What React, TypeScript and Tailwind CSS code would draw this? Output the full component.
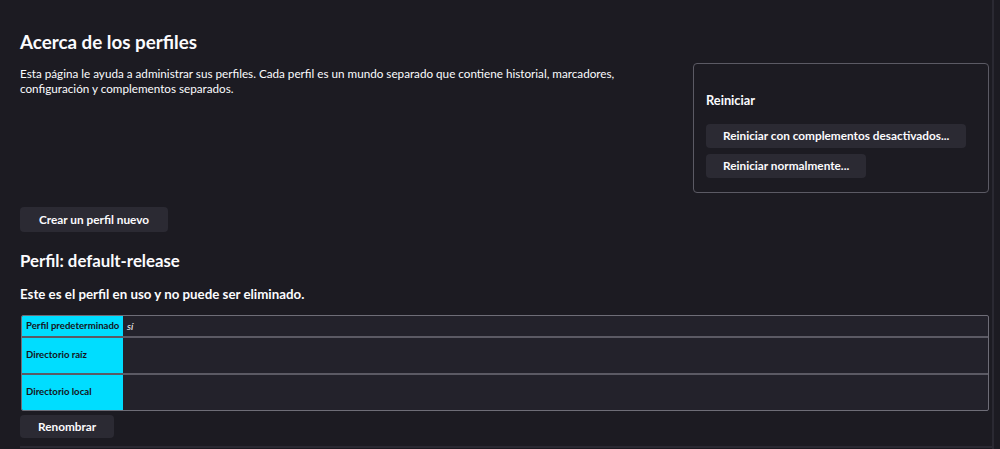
const font = "font-['Lato','Noto_Sans',sans-serif]";

const buttonClassName =
  "whitespace-nowrap rounded bg-[#2b2a33] text-[11.8px] font-bold text-[#fbfbfe] leading-none";

const rows = [
  { label: "Perfil predeterminado", value: "sí", height: "h-[20px]" },
  { label: "Directorio raíz", value: "", height: "h-[37px]" },
  { label: "Directorio local", value: "", height: "h-[37px]" },
];

export default function App() {
  return (
    <div
      className={`${font} h-[449px] w-[1000px] overflow-hidden bg-[#1c1b22] text-[#fbfbfe]`}
    >
      <div className="h-[449px] w-[994px] border-r-2 border-[#2a2932]">
        <div className="h-[446px] pl-5 pr-[3px]">
          <div className="flex justify-between">
            <div className="pt-[30px]">
              <h1 className="text-[18.8px] font-bold leading-[24px]">
                Acerca de los perfiles
              </h1>
              <p className="mt-[12px] w-[620px] text-[11.7px] leading-[15px]">
                Esta página le ayuda a administrar sus perfiles. Cada perfil es
                un mundo separado que contiene historial, marcadores,
                <br />
                configuración y complementos separados.
              </p>
            </div>
            <div className="mt-[63px] flex h-[130px] w-[296px] flex-col items-start rounded border border-[#5b5a64] px-3 pt-[26px]">
              <h2 className="text-[12.8px] font-bold leading-[20px]">
                Reiniciar
              </h2>
              <button className={`${buttonClassName} mt-[14px] h-[24px] px-[17px]`}>
                Reiniciar con complementos desactivados...
              </button>
              <button className={`${buttonClassName} mt-[6px] h-[24px] px-[17px]`}>
                Reiniciar normalmente...
              </button>
            </div>
          </div>
          <button className={`${buttonClassName} mt-[14px] h-[25px] px-[19px]`}>
            Crear un perfil nuevo
          </button>
          <h2 className="mt-[17px] text-[16.8px] font-bold leading-[24px]">
            Perfil: default-release
          </h2>
          <p className="mt-[12px] text-[13.3px] font-bold leading-[18px]">
            Este es el perfil en uso y no puede ser eliminado.
          </p>
          <div className="ml-px mt-[12px] overflow-hidden rounded-[2px] border border-[#6e6d77] bg-[#23222b]">
            {rows.map((row, i) => (
              <div
                key={row.label}
                className={`flex ${row.height} ${i > 0 ? "border-t-2 border-[#5b5a64]" : ""}`}
              >
                <div className="flex w-[101px] shrink-0 items-center whitespace-nowrap bg-[#00ddff] pl-[4px] text-[9.6px] font-bold text-[#15141a]">
                  {row.label}
                </div>
                <div className="flex items-center pl-[4px] text-[10px] italic">
                  {row.value}
                </div>
              </div>
            ))}
          </div>
          <button className={`${buttonClassName} mt-[4px] h-[23px] px-[18px]`}>
            Renombrar
          </button>
        </div>
        <div className="ml-5 h-[2px] bg-[#2a2932]" />
      </div>
    </div>
  );
}
